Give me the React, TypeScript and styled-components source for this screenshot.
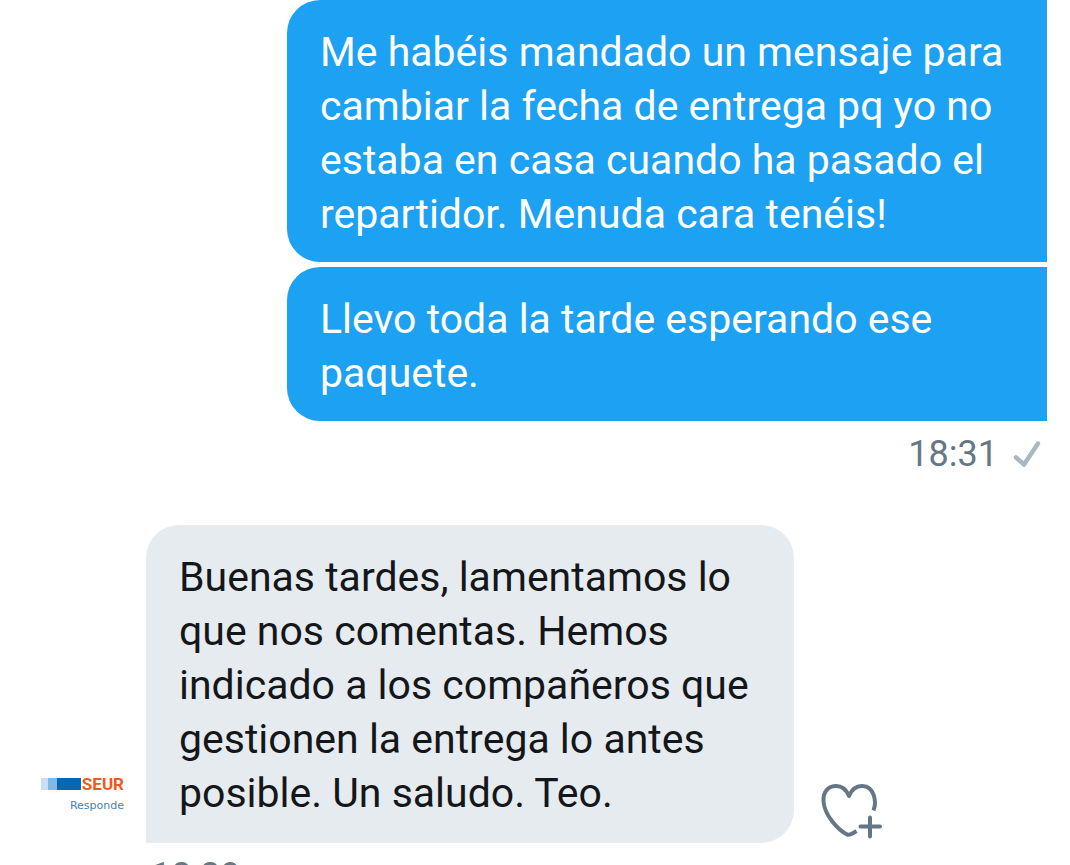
import React from "react";
import styled, { createGlobalStyle } from "styled-components";

const GlobalStyle = createGlobalStyle`
  * { box-sizing: border-box; }
  html, body { margin: 0; height: 100%; background: #fff; overflow: hidden; }
  body { font-family: Roboto, "Liberation Sans", sans-serif; }
`;

const Conversation = styled.main`
  height: 100vh;
  overflow: hidden;
  padding: 0 23px 0 41px;
`;

const Sent = styled.section`
  display: flex;
  flex-direction: column;
  gap: 5px;
  padding-left: 246px;
`;

const Bubble = styled.p<{ $side: "sent" | "received" }>`
  margin: 0;
  padding: 25px 33px 21px;
  font-size: 41px;
  line-height: 54px;
  color: ${(p) => (p.$side === "sent" ? "#fff" : "#14171a")};
  background: ${(p) => (p.$side === "sent" ? "#1da1f2" : "#e6ebef")};
  border-radius: ${(p) => (p.$side === "sent" ? "33px 0 0 33px" : "33px 33px 33px 0")};
`;

const Stamp = styled.div<{ $side: "sent" | "received" }>`
  display: flex;
  align-items: center;
  justify-content: ${(p) => (p.$side === "sent" ? "flex-end" : "flex-start")};
  gap: 14px;
  padding: ${(p) => (p.$side === "sent" ? "12px 5px 0 0" : "12px 0 0 110px")};
  font-size: 36px;
  line-height: 42px;
  color: #657786;
`;

const ReceivedRow = styled.section`
  display: flex;
  align-items: flex-end;
  margin-top: 50px;
`;

const ReceivedBubble = styled(Bubble)`
  flex: 0 1 648px;
  padding-bottom: 23px;
`;

const Avatar = styled.a`
  flex: none;
  display: flex;
  flex-direction: column;
  align-items: flex-end;
  gap: 9px;
  width: 83px;
  margin: 0 22px 31px 0;
  text-decoration: none;
`;

const Brand = styled.span`
  display: flex;
  align-items: center;
  gap: 1px;
  color: #f05a22;
  font-size: 17px;
  font-weight: 700;
  line-height: 14px;
`;

const Handle = styled.span`
  color: #3c83bb;
  font-family: "DejaVu Sans", sans-serif;
  font-size: 11px;
  line-height: 12px;
`;

const LikeButton = styled.button`
  flex: none;
  display: block;
  margin: 0 0 4px 26px;
  padding: 0;
  border: 0;
  background: none;
  line-height: 0;
  cursor: pointer;
`;

export default function App() {
  return (
    <>
      <GlobalStyle />
      <Conversation>
        <Sent>
          <Bubble $side="sent">
            Me habéis mandado un mensaje para cambiar la fecha de entrega pq yo no estaba en
            casa cuando ha pasado el repartidor. Menuda cara tenéis!
          </Bubble>
          <Bubble $side="sent">Llevo toda la tarde esperando ese paquete.</Bubble>
        </Sent>
        <Stamp $side="sent">
          <time>18:31</time>
          <svg width="30" height="30" viewBox="0 0 30 30" fill="none" role="img" aria-label="Enviado">
            <path d="M4 18.5 L12 25.5 L26 4.5" stroke="#aab8c2" strokeWidth="4.5" strokeLinecap="round" strokeLinejoin="round" />
          </svg>
        </Stamp>
        <ReceivedRow>
          <Avatar href="#seur" aria-label="SEUR Responde">
            <Brand>
              <svg width="40" height="12" viewBox="0 0 40 12" aria-hidden="true">
                <rect width="8" height="12" fill="#cbdff4" />
                <rect x="7" width="10" height="12" fill="#82b7e7" />
                <rect x="16" width="24" height="12" fill="#0968b3" />
              </svg>
              SEUR
            </Brand>
            <Handle>Responde</Handle>
          </Avatar>
          <ReceivedBubble $side="received">
            Buenas tardes, lamentamos lo que nos comentas. Hemos indicado a los compañeros que
            gestionen la entrega lo antes posible. Un saludo. Teo.
          </ReceivedBubble>
          <LikeButton type="button" aria-label="Añadir reacción">
            <svg width="64" height="56" viewBox="0 0 64 56" fill="none" stroke="#657786" strokeWidth="4" strokeLinejoin="round">
              <path d="M53.5 27.5 C57 18 54 3.500 42.500 3 C36 2.700 31.500 7 29 13 C26.500 7 22 2.700 15.500 3 C7 3.500 3 10 3.500 18 C4.200 32 18 47 27 51.500 C30 52.500 33 50.500 36.500 48" />
              <path d="M50 34.500 V53.500 M40.500 43.500 H60" strokeLinecap="round" />
            </svg>
          </LikeButton>
        </ReceivedRow>
        <Stamp $side="received">
          <time>18:39</time>
        </Stamp>
      </Conversation>
    </>
  );
}
